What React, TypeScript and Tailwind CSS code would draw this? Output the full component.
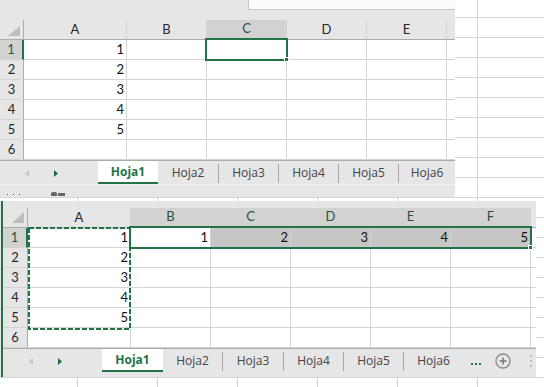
import React from 'react';
import clsx from 'clsx';

type Col = { label: string; w: string; sel?: boolean };

const topCols: Col[] = [
  { label: 'A', w: 'w-[103px]' },
  { label: 'B', w: 'w-[80px]' },
  { label: 'C', w: 'w-[80px]', sel: true },
  { label: 'D', w: 'w-[80px]' },
  { label: 'E', w: 'w-[80px]' },
];

const bottomCols: Col[] = [
  { label: 'A', w: 'w-[103px]' },
  { label: 'B', w: 'w-[80px]', sel: true },
  { label: 'C', w: 'w-[80px]', sel: true },
  { label: 'D', w: 'w-[80px]', sel: true },
  { label: 'E', w: 'w-[80px]', sel: true },
  { label: 'F', w: 'w-[80px]', sel: true },
];

const Corner = ({ w, tri }: { w: string; tri: string }) => (
  <div className={clsx(w, 'h-full border-r border-b border-[#ababab] bg-[#e6e6e6]')}>
    <svg width="24" height="19" className="block">
      <polygon points={tri} fill="#bdbdbd" />
    </svg>
  </div>
);

const HeaderRow = ({ rh, tri, cols }: { rh: string; tri: string; cols: Col[] }) => (
  <div className="flex h-[20px] text-[13px]">
    <Corner w={rh} tri={tri} />
    {cols.map((c) => (
      <div
        key={c.label}
        className={clsx(
          c.w,
          'flex h-full items-center justify-center border-r border-r-[#d4d4d4]',
          c.sel
            ? 'border-b-2 border-b-[#217346] bg-[#d2d2d2] text-[#2f4f3c]'
            : 'border-b border-b-[#ababab] bg-[#e6e6e6] text-[#262626]'
        )}
      >
        {c.label}
      </div>
    ))}
    <div className="h-full flex-1 border-b border-[#ababab] bg-[#e6e6e6]" />
  </div>
);

type Cell = { v?: number; fill?: boolean };

const BodyRow = ({ n, rh, sel, cols, cells }: { n: number; rh: string; sel?: boolean; cols: Col[]; cells: Cell[] }) => (
  <div className="flex h-[20px] text-[13px]">
    <div
      className={clsx(
        rh,
        'flex h-full items-center justify-center border-b border-b-[#d4d4d4]',
        sel
          ? 'border-r-2 border-r-[#217346] bg-[#d2d2d2] text-[#2f4f3c]'
          : 'border-r border-r-[#ababab] bg-[#e6e6e6] text-[#262626]'
      )}
    >
      {n}
    </div>
    {cols.map((c, i) => (
      <div
        key={c.label}
        className={clsx(
          c.w,
          'flex h-full items-center justify-end border-r border-b border-[#d4d4d4] pr-[2px] text-[#111]',
          cells[i]?.fill ? 'bg-[#c6c6c6]' : 'bg-white'
        )}
      >
        {cells[i]?.v}
      </div>
    ))}
    <div className="h-full flex-1 border-b border-[#d4d4d4] bg-white" />
  </div>
);

const Sep = () => <div className="mt-[3px] h-[19px] w-px bg-[#a6a6a6]" />;

const Arrows = ({ w, off }: { w: string; off: number }) => (
  <div className={clsx(w, 'h-full')}>
    <svg width="110" height="23" className="block">
      <polygon points={`${29 + off},9 ${29 + off},16 ${25 + off},12.5`} fill="#c6c6c6" />
      <polygon points={`${54 + off},9 ${54 + off},16 ${58 + off},12.5`} fill="#1e6b3f" />
    </svg>
  </div>
);

const ActiveTab = ({ w }: { w: string }) => (
  <div className={clsx(w, 'flex h-full items-center justify-center border-b-2 border-[#217346] bg-white pt-[1px] font-bold text-[#217346]')}>
    Hoja1
  </div>
);

const Tab = ({ w, label }: { w: string; label: string }) => (
  <div className={clsx(w, 'flex h-full items-center justify-center')}>{label}</div>
);

function TopSheet() {
  const rows: Cell[][] = [[{ v: 1 }], [{ v: 2 }], [{ v: 3 }], [{ v: 4 }], [{ v: 5 }], []];
  return (
    <div className="relative flex h-[197px] w-[455px] flex-col bg-[#e6e6e6]">
      <div className="h-[20px]">
        <div className="ml-[248px] h-[10px] border-l border-b border-[#c6c6c6] bg-[#fbfbfb]" />
      </div>
      <HeaderRow rh="w-[24px]" tri="8,16 20,16 20,6" cols={topCols} />
      {rows.map((r, i) => (
        <BodyRow key={i} n={i + 1} rh="w-[24px]" sel={i === 0} cols={topCols} cells={r} />
      ))}
      <div className="flex h-[24px] border-t border-[#ababab] font-['Open_Sans',sans-serif] text-[12px] text-[#444]">
        <Arrows w="w-[98px]" off={0} />
        <ActiveTab w="w-[60px]" />
        <Tab w="w-[60px]" label="Hoja2" />
        <Sep />
        <Tab w="w-[59px]" label="Hoja3" />
        <Sep />
        <Tab w="w-[59px]" label="Hoja4" />
        <Sep />
        <Tab w="w-[59px]" label="Hoja5" />
        <Sep />
        <Tab w="w-[56px]" label="Hoja6" />
      </div>
      <div className="flex h-[13px] items-end gap-[5px] border-t border-[#f2f2f2] pb-[1px] pl-[7px]">
        <div className="mb-[1px] h-px w-px bg-[#555]" />
        <div className="mb-[1px] h-px w-px bg-[#555]" />
        <div className="mb-[1px] h-px w-px bg-[#555]" />
        <div className="ml-[26px] h-[4px] w-[6px] rounded-t-[2px] bg-[#666]" />
        <div className="ml-[-4px] h-[3px] w-[7px] bg-[#666]" />
      </div>

      {/* active cell C1 */}
      <div className="absolute left-[205px] top-[38px] h-[23px] w-[83px] border-2 border-[#217346]" />
      <div className="absolute left-[284px] top-[57px] h-[5px] w-[5px] border border-white bg-[#217346]" />
    </div>
  );
}

function BottomSheet() {
  const rows: Cell[][] = [
    [{ v: 1 }, { v: 1 }, { v: 2, fill: true }, { v: 3, fill: true }, { v: 4, fill: true }, { v: 5, fill: true }],
    [{ v: 2 }],
    [{ v: 3 }],
    [{ v: 4 }],
    [{ v: 5 }],
    [],
  ];
  return (
    <div className="relative mt-[4px] h-[176px] w-[536px] bg-[#e6e6e6] pl-[1px]">
      <div className="flex h-full flex-col border-l-2 border-[#217346] pt-[7px]">
        <HeaderRow rh="w-[25px]" tri="9,15 21,15 21,4" cols={bottomCols} />
        {rows.map((r, i) => (
          <BodyRow key={i} n={i + 1} rh="w-[25px]" sel={i === 0} cols={bottomCols} cells={r} />
        ))}
        <div className="flex h-[24px] border-t border-[#ababab] font-['Open_Sans',sans-serif] text-[12px] text-[#444]">
          <Arrows w="w-[99px]" off={1} />
          <ActiveTab w="w-[61px]" />
          <Tab w="w-[59px]" label="Hoja2" />
          <Sep />
          <Tab w="w-[60px]" label="Hoja3" />
          <Sep />
          <Tab w="w-[59px]" label="Hoja4" />
          <Sep />
          <Tab w="w-[59px]" label="Hoja5" />
          <Sep />
          <Tab w="w-[59px]" label="Hoja6" />
          <div className="ml-[8px] flex items-end gap-[2px] pb-[7px]">
            <div className="h-[2px] w-[2px] bg-[#217346]" />
            <div className="h-[2px] w-[2px] bg-[#217346]" />
            <div className="h-[2px] w-[2px] bg-[#217346]" />
          </div>
          <svg width="16" height="16" className="ml-[14px] mt-[4px]">
            <circle cx="8" cy="8" r="7" fill="none" stroke="#8a8a8a" strokeWidth="1.3" />
            <path d="M8 4.5v7M4.5 8h7" stroke="#777" strokeWidth="1.5" />
          </svg>
          <div className="ml-[19px] flex flex-col justify-center gap-[3px]">
            <div className="h-[2px] w-[2px] bg-[#bdbdbd]" />
            <div className="h-[2px] w-[2px] bg-[#bdbdbd]" />
            <div className="h-[2px] w-[2px] bg-[#bdbdbd]" />
          </div>
        </div>
      </div>

      {/* copied range A1:A5 */}
      <svg width="104" height="104" className="absolute left-[28px] top-[26px]">
        <rect x="1" y="1" width="101" height="101" fill="none" stroke="#217346" strokeWidth="2" strokeDasharray="5 2" />
      </svg>
      {/* selection B1:F1 */}
      <div className="absolute left-[129px] top-[25px] h-[23px] w-[403px] border-2 border-[#217346]" />
      <div className="absolute left-[528px] top-[44px] h-[5px] w-[5px] border border-white bg-[#217346]" />
    </div>
  );
}

export default function App() {
  return (
    <div className="h-[387px] w-[544px] overflow-hidden bg-white bg-[linear-gradient(to_right,#d4d4d4_1px,transparent_1px),linear-gradient(to_bottom,#d4d4d4_1px,transparent_1px)] font-['Lato',sans-serif] [background-position:77px_17px] [background-size:80px_20px]">
      <TopSheet />
      <BottomSheet />
    </div>
  );
}
